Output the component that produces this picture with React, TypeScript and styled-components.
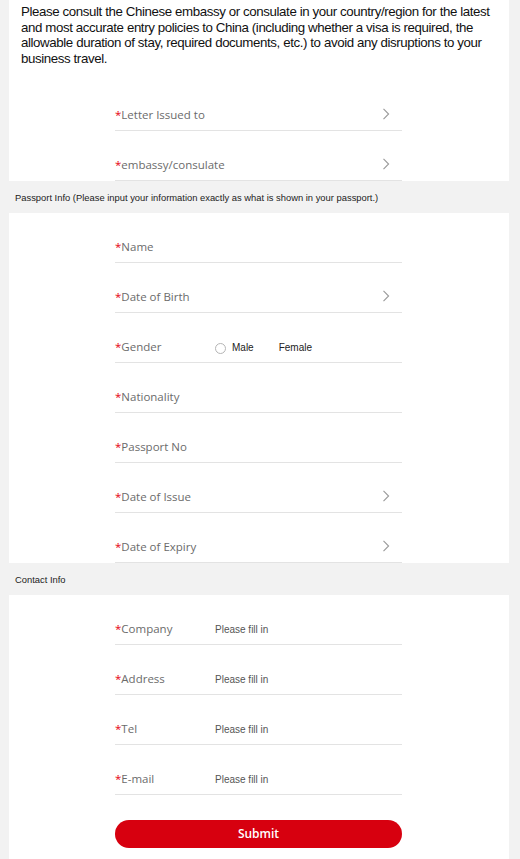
import React from "react"
import styled, { createGlobalStyle } from "styled-components"

const GlobalStyle = createGlobalStyle`
    html, body {
        margin: 0;
        padding: 0;
        background: #f2f2f2;
    }
    * {
        box-sizing: border-box;
    }
`

const Page = styled.div`
    width: 509px;
    display: flex;
    flex-direction: column;
    font-family: "Liberation Sans", Arial, sans-serif;
`
const Block = styled.section<{ $bottom?: number }>`
    margin-left: 9px;
    background: #ffffff;
    padding: 0 107px ${({ $bottom }) => $bottom ?? 0}px 106px;
`
const Notice = styled.p`
    margin: 0 -95px 15px -94px;
    padding-top: 4px;
    font-size: 13.3px;
    letter-spacing: -0.4px;
    line-height: 15.5px;
    color: #111;
`
const SectionTitle = styled.div`
    height: 32px;
    display: flex;
    align-items: center;
    padding-left: 15px;
    font-size: 9.4px;
    color: #222;
`
const Row = styled.div`
    height: 50px;
    display: flex;
    align-items: flex-end;
    padding: 0 12px 8px 0;
    border-bottom: 1px solid #e3e3e3;
`
const Label = styled.span`
    width: 100px;
    flex-shrink: 0;
    font-family: "Open Sans", "Noto Sans", sans-serif;
    font-size: 11.5px;
    line-height: 14px;
    color: #6b6b6b;
`
const Star = styled.span`
    color: #e60012;
`
const Value = styled.span`
    flex: 1;
    display: flex;
    align-items: center;
    margin-bottom: -1px;
    font-size: 10px;
    line-height: 14px;
    color: #555;
`
const Chevron = styled.svg`
    width: 8px;
    height: 12px;
    margin-bottom: 2px;
`
const Radio = styled.span`
    width: 11px;
    height: 11px;
    border-radius: 50%;
    border: 1px solid #b5b5b5;
    margin-right: 6px;
`
const Option = styled.span<{ $gap?: number }>`
    color: #222;
    margin-right: ${({ $gap }) => $gap ?? 0}px;
`
const Submit = styled.button`
    width: 100%;
    height: 28px;
    margin-top: 25px;
    border: none;
    border-radius: 14px;
    background: #d7000f;
    color: #ffffff;
    font-family: "Open Sans", "Noto Sans", sans-serif;
    font-size: 12px;
    font-weight: 600;
    line-height: 26px;
    cursor: pointer;
`

const Arrow = () => (
    <Chevron viewBox="0 0 8 12">
        <path d="M1.5 0.8 L6.6 6 L1.5 11.2" fill="none" stroke="#9a9a9a" strokeWidth="1.1" />
    </Chevron>
)

const Field = ({ label, arrow, children }: { label: string; arrow?: boolean; children?: React.ReactNode }) => (
    <Row>
        <Label><Star>*</Star>{label}</Label>
        <Value>{children}</Value>
        {arrow && <Arrow />}
    </Row>
)

export default function App() {
    const passport: Array<[string, boolean]> = [
        ['Name', false],
        ['Date of Birth', true],
    ]
    const passportRest: Array<[string, boolean]> = [
        ['Nationality', false],
        ['Passport No', false],
        ['Date of Issue', true],
        ['Date of Expiry', true],
    ]
    const contact: Array<string> = ['Company', 'Address', 'Tel', 'E-mail']
    return (
        <Page>
            <GlobalStyle />
            <Block>
                <Notice>
                    Please consult the Chinese embassy or consulate in your country/region for the latest and most accurate entry policies to China (including whether a visa is required, the allowable duration of stay, required documents, etc.) to avoid any disruptions to your business travel.
                </Notice>
                <Field label="Letter Issued to" arrow />
                <Field label="embassy/consulate" arrow />
            </Block>
            <SectionTitle>Passport Info (Please input your information exactly as what is shown in your passport.)</SectionTitle>
            <Block>
                {passport.map(([label, arrow]) => (
                    <Field label={label} arrow={arrow} key={label} />
                ))}
                <Field label="Gender">
                    <Radio />
                    <Option $gap={25}>Male</Option>
                    <Option>Female</Option>
                </Field>
                {passportRest.map(([label, arrow]) => (
                    <Field label={label} arrow={arrow} key={label} />
                ))}
            </Block>
            <SectionTitle>Contact Info</SectionTitle>
            <Block $bottom={20}>
                {contact.map((label) => (
                    <Field label={label} key={label}>Please fill in</Field>
                ))}
                <Submit>Submit</Submit>
            </Block>
        </Page>
    )
}
